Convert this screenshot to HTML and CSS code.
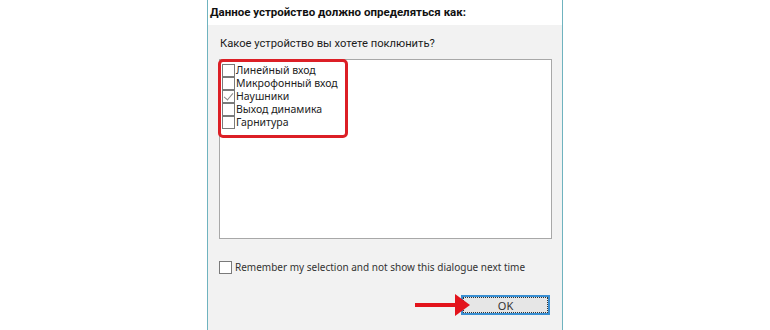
FILE: index.html
```html
<!DOCTYPE html>
<html lang="ru">
<head>
    <meta charset="UTF-8">
    <title>Выбор устройства</title>
    <link rel="stylesheet" href="styles.css">
</head>
<body>
    <div class="window">
        <div class="header">Данное устройство должно определяться как:</div>
        <div class="content">
            <p class="question">Какое устройство вы хотете поклюнить?</p>
            <div class="listbox">
                <div class="highlight">
                    <div class="item"><span class="box"></span>Линейный вход</div>
                    <div class="item"><span class="box"></span>Микрофонный вход</div>
                    <div class="item"><span class="box checked"></span>Наушники</div>
                    <div class="item"><span class="box"></span>Выход динамика</div>
                    <div class="item"><span class="box"></span>Гарнитура</div>
                </div>
            </div>
            <div class="remember"><span class="box"></span>Remember my selection and not show this dialogue next time</div>
            <div class="buttons">
                <svg class="arrow" width="56" height="24" viewBox="0 0 56 24">
                    <rect x="0" y="10" width="44" height="4" fill="#e3141c"/>
                    <polygon points="40,1 55,12 40,23" fill="#e3141c"/>
                </svg>
                <button class="ok-button" type="button">OK</button>
            </div>
        </div>
    </div>
</body>
</html>
```

FILE: styles.css
```css
body {
    margin: 0;
    padding: 0;
    background-color: white;
    color: #1b1b1b;
    font-family: 'Noto Sans', sans-serif;
}

.window {
    margin-left: 207px;
    width: 354px;
    height: 330px;
    border-left: 1px solid #6fb3bf;
    border-right: 1px solid #6fb3bf;
    display: flex;
    flex-direction: column;
}

.header {
    height: 25px;
    line-height: 25px;
    background-color: white;
    padding-left: 2px;
    font-family: Roboto, sans-serif;
    font-weight: bold;
    font-size: 11.5px;
    color: #111;
}

.content {
    flex: 1;
    background-color: #f2f2f2;
    padding: 0 10px 0 11px;
}

.question {
    margin: 11px 0 0 1px;
    font-family: Roboto, sans-serif;
    font-size: 11.2px;
    line-height: 16px;
}

.listbox {
    margin-top: 7px;
    width: 331px;
    height: 178px;
    border: 1px solid #a8a8a8;
    background-color: white;
}

.highlight {
    width: 123px;
    margin: -1px 0 0 -2px;
    padding: 2px 0 6px 1px;
    border: 3px solid #dc1f26;
    border-radius: 5px;
}

.item {
    display: flex;
    align-items: center;
    height: 13px;
    line-height: 13px;
    font-size: 10.5px;
    color: #222;
}

.box {
    box-sizing: border-box;
    width: 13px;
    height: 13px;
    border: 1px solid #7a7a7a;
    background-color: white;
    margin-right: 1px;
    position: relative;
    flex-shrink: 0;
}

.box.checked::after {
    content: "";
    position: absolute;
    left: 3px;
    top: 0;
    width: 4px;
    height: 8px;
    border-right: 1px solid #888;
    border-bottom: 1px solid #888;
    transform: rotate(40deg);
}

.remember {
    display: flex;
    align-items: center;
    margin-top: 22px;
    font-size: 10px;
    line-height: 13px;
    color: #333;
}

.remember .box {
    margin-right: 3px;
}

.buttons {
    display: flex;
    justify-content: flex-end;
    margin-top: 21px;
    padding-right: 2px;
    position: relative;
}

.ok-button {
    width: 89px;
    height: 20px;
    border: 2px solid #3a8fd2;
    outline: 1px dotted #333;
    outline-offset: -3px;
    background-color: #e6e6e6;
    font-family: 'Noto Sans', sans-serif;
    font-size: 11px;
    color: #333;
    padding: 0;
}

.arrow {
    position: absolute;
    left: 196px;
    top: -2px;
}
```
